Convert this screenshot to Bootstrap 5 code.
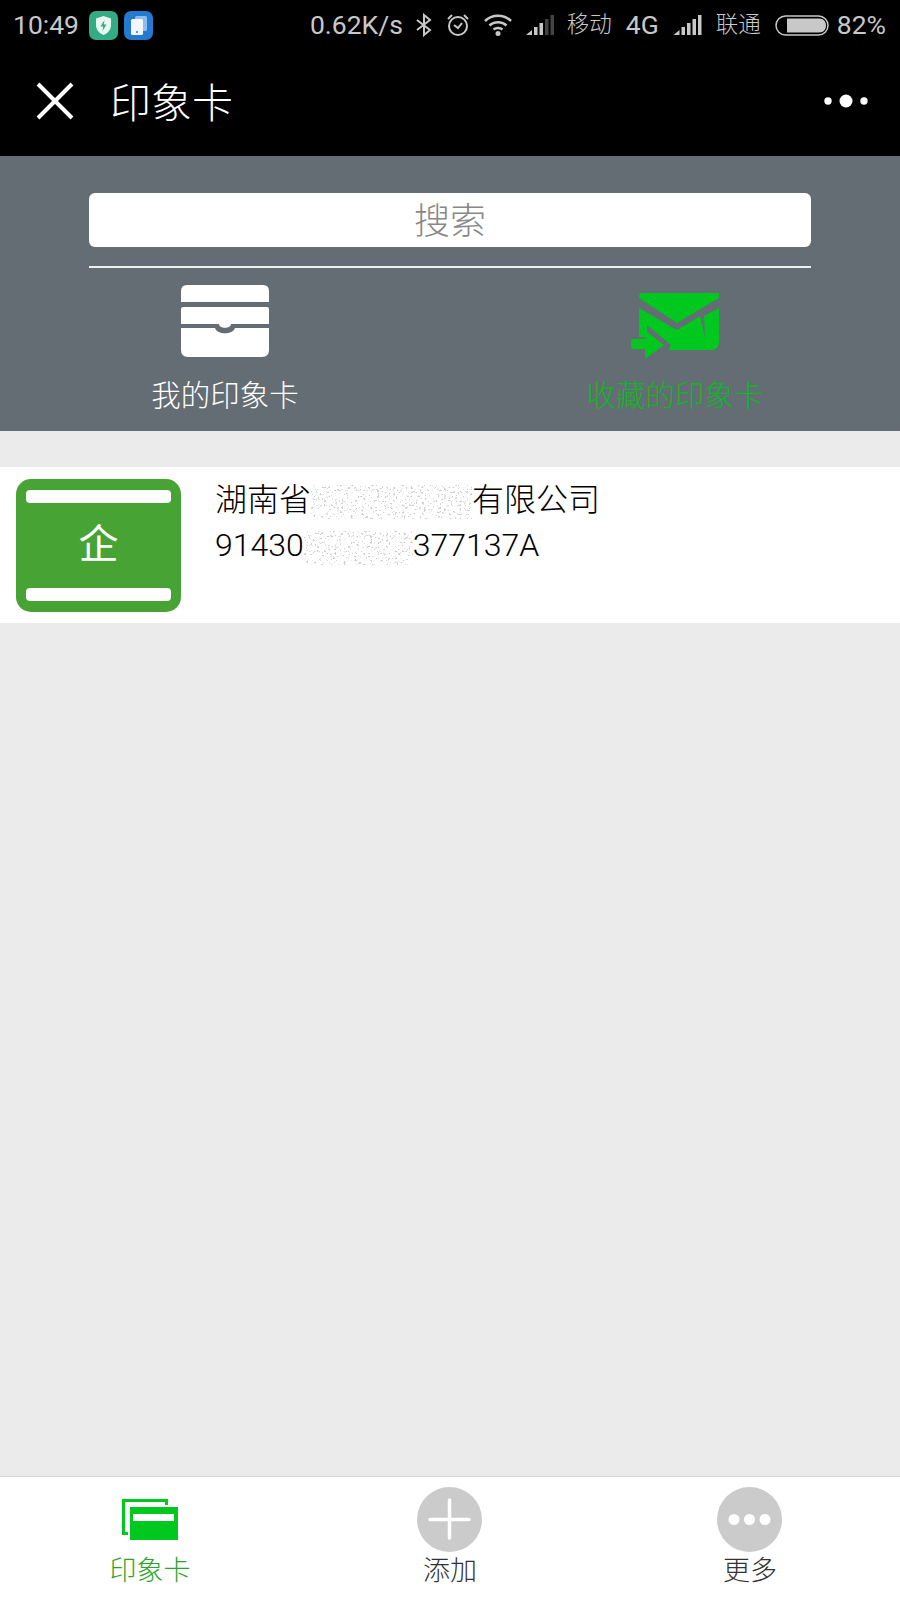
<!DOCTYPE html>
<html lang="zh-CN">
<head>
    <meta charset="UTF-8">
    <title>印象卡</title>
    <link href="https://cdn.jsdelivr.net/npm/bootstrap@5.3.3/dist/css/bootstrap.min.css" rel="stylesheet">
    <style>
        body {
            font-family: "Liberation Sans", "Noto Sans CJK SC", sans-serif;
            background-color: #ebebeb;
        }

        .screen {
            height: 1600px;
        }

        /* status bar */
        .status-bar {
            height: 50px;
            padding: 0 14px 0 13px;
            color: #c8c8c8;
            font-family: Roboto, "Noto Sans CJK SC", sans-serif;
            font-size: 26.5px;
            font-weight: 400;
            line-height: 1;
            white-space: nowrap;
        }

        .app-badge {
            width: 29px;
            height: 29px;
            border-radius: 7px;
            margin-right: 6px;
        }

        .badge-green {
            background-color: #33ab84;
            margin-left: 10px;
        }

        .badge-blue {
            background-color: #2479d0;
        }

        .status-right {
            gap: 14px;
        }

        .status-tight {
            margin-left: -1px;
        }

        .status-cjk {
            font-family: "Noto Sans CJK SC", sans-serif;
            font-size: 22.5px;
            font-weight: 300;
            margin-top: -5px;
        }

        .status-pct {
            margin-left: -6px;
        }

        .title-bar {
            height: 106px;
            padding: 0 32px 5px 36px;
        }

        .title-text {
            font-family: "Noto Sans CJK SC", sans-serif;
            font-size: 41px;
            font-weight: 300;
            line-height: 1;
            margin-left: 36px;
        }

        /* header panel */
        .top-panel {
            height: 275px;
            background-color: #646c74;
            padding-top: 37px;
        }

        .search-area {
            width: 722px;
            margin: 0 auto;
        }

        .search-box {
            height: 54px;
            border-radius: 6px;
            color: #888;
            font-family: "Noto Sans CJK SC", sans-serif;
            font-size: 36px;
            font-weight: 300;
            line-height: 50px;
        }

        .search-line {
            height: 2px;
            margin-top: 19px;
            background-color: #eef0f0;
        }

        .panel-icon {
            height: 76px;
            margin-top: 17px;
        }

        .panel-label {
            margin-top: 12px;
            font-family: "Noto Sans CJK SC", sans-serif;
            font-size: 29.5px;
            font-weight: 300;
            line-height: 40px;
        }

        .label-green {
            color: #12b52a;
        }

        /* list */
        .card-row {
            height: 156px;
            margin-top: 36px;
            padding: 12px 0 0 16px;
        }

        .qi-icon {
            width: 165px;
            height: 133px;
            border-radius: 15px;
            background-color: #47a333;
            padding: 11px 10px;
        }

        .qi-bar {
            height: 13px;
            border-radius: 4px;
        }

        .qi-char {
            font-family: "Noto Sans CJK SC", sans-serif;
            font-size: 40px;
            font-weight: 400;
            line-height: 1;
            margin-bottom: 10px;
        }

        .card-text {
            margin-left: 34px;
            margin-top: -3px;
            font-family: Roboto, "Noto Sans CJK SC", sans-serif;
            font-size: 32px;
            font-weight: 300;
            line-height: 46px;
            white-space: nowrap;
        }

        .card-name {
            font-family: "Noto Sans CJK SC", sans-serif;
            font-weight: 300;
            margin-top: -2px;
            margin-bottom: 2px;
        }

        .masked {
            display: inline-block;
            vertical-align: middle;
        }

        /* tab bar */
        .tab-bar {
            height: 124px;
            border-top: 1px solid #d4d4d4;
        }

        .tab-icon {
            height: 65px;
            margin-top: 10px;
        }

        .tab-label {
            margin-top: -2px;
            font-family: "Noto Sans CJK SC", sans-serif;
            font-size: 27px;
            font-weight: 300;
            line-height: 38px;
            color: #333;
        }

        .tab-active {
            color: #2aa52a;
        }
    </style>
</head>
<body>

<div class="screen d-flex flex-column">

    <!-- status bar -->
    <div class="bg-black">
        <div class="status-bar d-flex align-items-center">
            <span>10:49</span>
            <span class="app-badge badge-green d-flex align-items-center justify-content-center">
                <svg width="21" height="21" viewBox="0 0 21 21"><path d="M10.500 1 L18 3.500 V10 C18 15 14.500 18.500 10.500 20 C6.500 18.500 3 15 3 10 V3.500 Z" fill="#e8f7f1"/><path d="M11.500 5 L7.500 11.500 H10.200 L9.500 16 L13.500 9.500 H10.800 Z" fill="#33ab84"/></svg>
            </span>
            <span class="app-badge badge-blue d-flex align-items-center justify-content-center">
                <svg width="21" height="21" viewBox="0 0 21 21"><rect x="7" y="1" width="12" height="15" rx="1.500" fill="#8fbdec"/><rect x="3" y="4" width="12" height="16" rx="1.500" fill="#f2f7fd"/><circle cx="9" cy="17" r="1" fill="#2479d0"/></svg>
            </span>

            <div class="status-right ms-auto d-flex align-items-center">
                <span>0.62K/s</span>
                <svg class="status-tight" width="16" height="24" viewBox="0 0 16 24" fill="none" stroke="#c8c8c8" stroke-width="2"><path d="M1 7 L14 17 L8 22 V2 L14 7 L1 17"/></svg>
                <svg width="24" height="24" viewBox="0 0 24 24" fill="none" stroke="#c8c8c8" stroke-width="2"><circle cx="12" cy="13" r="9"/><path d="M8 12 L12 15 L16 10 M2 6 L6 2 M18 2 L22 6"/></svg>
                <svg class="status-tight" width="30" height="24" viewBox="0 0 30 24" fill="none" stroke="#c8c8c8" stroke-width="2.500"><path d="M2 8 C9 1 21 1 28 8 M6.500 12.500 C11 8 19 8 23.500 12.500 M10.500 16.500 C13 14.500 17 14.500 19.500 16.500"/><circle cx="15" cy="20.500" r="2.500" fill="#c8c8c8" stroke="none"/></svg>
                <svg class="status-tight" width="28" height="21" viewBox="0 0 28 21"><path d="M0 20 L6 15 V20 Z" fill="#c8c8c8"/><rect x="8" y="12" width="3.500" height="8" fill="#c8c8c8"/><rect x="13.500" y="8" width="3.500" height="12" fill="#c8c8c8"/><rect x="19" y="4" width="3.500" height="16" fill="#444"/><rect x="24.500" y="0" width="3.500" height="20" fill="#444"/></svg>
                <span class="status-cjk status-tight">移动</span>
                <span>4G</span>
                <svg width="29" height="21" viewBox="0 0 28 21" fill="#c8c8c8"><path d="M0 20 L6 15 V20 Z"/><rect x="8" y="12" width="3.500" height="8"/><rect x="13.500" y="8" width="3.500" height="12"/><rect x="19" y="4" width="3.500" height="16"/><rect x="24.500" y="0" width="3.500" height="20"/></svg>
                <span class="status-cjk">联通</span>
                <svg width="54" height="21" viewBox="0 0 54 21"><rect x="1" y="1" width="52" height="19" rx="9.500" fill="none" stroke="#c8c8c8" stroke-width="1.500"/><path d="M12 3.500 H44 C49 3.500 51 7 51 10.500 C51 14 49 17.500 44 17.500 H12 Z" fill="#c8c8c8"/></svg>
                <span class="status-pct">82%</span>
            </div>
        </div>

        <!-- title bar -->
        <div class="title-bar d-flex align-items-center text-white">
            <svg width="38" height="38" viewBox="0 0 38 38" stroke="#fff" stroke-width="4"><path d="M2 2 L36 36 M36 2 L2 36"/></svg>
            <span class="title-text">印象卡</span>
            <svg class="ms-auto" width="44" height="16" viewBox="0 0 44 16" fill="#fff"><circle cx="4" cy="8" r="3.700"/><circle cx="22" cy="8" r="6.500"/><circle cx="40" cy="8" r="3.700"/></svg>
        </div>
    </div>

    <!-- search + categories -->
    <div class="top-panel">
        <div class="search-area">
            <div class="search-box bg-white text-center">搜索</div>
            <div class="search-line"></div>
        </div>
        <div class="row g-0 text-center">
            <div class="col-6">
                <div class="panel-icon d-flex justify-content-center">
                    <svg width="88" height="72" viewBox="0 0 88 72" fill="#fff">
                        <path d="M6 0 H82 Q88 0 88 6 V17 H0 V6 Q0 0 6 0 Z"/>
                        <path d="M2 22 H86 Q88 22 88 24 V39 H50 C50 44 38 44 38 39 H0 V24 Q0 22 2 22 Z"/>
                        <path d="M0 43 H34 C36 50 52 50 54 43 H88 V65 Q88 72 81 72 H7 Q0 72 0 65 Z"/>
                    </svg>
                </div>
                <div class="panel-label text-white">我的印象卡</div>
            </div>
            <div class="col-6">
                <div class="panel-icon d-flex justify-content-center">
                    <svg width="88" height="76" viewBox="0 -7 88 76" fill="#00c81f">
                        <path d="M10 1 H86 Q90 1 88 6 L46 31 L8 6 Q8 1 10 1 Z"/>
                        <path d="M8 16 L46 38 L69 24 L74 45 L73 24 L88 16 V50 Q88 58 80 58 H37 L40 53 L16 33 V45 H8 Z"/>
                        <path d="M2 47 H14 V38 L33 53 L14 67 V57 H2 Q0 57 0 55 V49 Q0 47 2 47 Z"/>
                    </svg>
                </div>
                <div class="panel-label label-green">收藏的印象卡</div>
            </div>
        </div>
    </div>

    <!-- saved card -->
    <div class="card-row bg-white d-flex">
        <div class="qi-icon d-flex flex-column justify-content-between flex-shrink-0">
            <div class="qi-bar bg-white"></div>
            <div class="qi-char text-white text-center">企</div>
            <div class="qi-bar bg-white"></div>
        </div>
        <div class="card-text text-black">
            <!-- the name and number are smudged out in the screenshot -->
            <svg width="0" height="0" class="position-absolute">
                <filter id="smudge" x="0" y="0" width="100%" height="100%">
                    <feTurbulence type="fractalNoise" baseFrequency="0.45" numOctaves="2" seed="7"/>
                    <feColorMatrix type="matrix" values="0 0 0 0 0.62  0 0 0 0 0.62  0 0 0 0 0.62  0 0 0 9 -5.400"/>
                </filter>
            </svg>
            <div class="card-name">湖南省<svg class="masked" width="161" height="34" viewBox="0 0 161 34"><rect width="161" height="34" filter="url(#smudge)"/></svg>有限公司</div>
            <div>91430<svg class="masked" width="109" height="34" viewBox="0 0 109 34"><rect width="109" height="34" filter="url(#smudge)"/></svg>377137A</div>
        </div>
    </div>

    <div class="flex-grow-1"></div>

    <!-- tab bar -->
    <div class="tab-bar bg-white row g-0 text-center">
        <div class="col-4">
            <div class="tab-icon d-flex justify-content-center align-items-center">
                <svg width="56" height="41" viewBox="0 0 56 41" fill="#00c81f">
                    <path d="M0 0 H46 V6 H43 V3 H3 V33 H6 V36 H0 Z"/>
                    <path d="M8 8 H56 V41 H8 Z M11 15 V22 H52 V15 Z" fill-rule="evenodd"/>
                </svg>
            </div>
            <div class="tab-label tab-active">印象卡</div>
        </div>
        <div class="col-4">
            <div class="tab-icon d-flex justify-content-center">
                <svg width="65" height="65" viewBox="0 0 65 65"><circle cx="32.500" cy="32.500" r="32.500" fill="#cbcbcb"/><path d="M32.500 13 V51 M13 32.500 H52" stroke="#fff" stroke-width="3.500" stroke-linecap="round"/></svg>
            </div>
            <div class="tab-label">添加</div>
        </div>
        <div class="col-4">
            <div class="tab-icon d-flex justify-content-center">
                <svg width="65" height="65" viewBox="0 0 65 65" fill="#fff"><circle cx="32.500" cy="32.500" r="32.500" fill="#cbcbcb"/><circle cx="17" cy="32.500" r="5.500"/><circle cx="32.500" cy="32.500" r="5.500"/><circle cx="48" cy="32.500" r="5.500"/></svg>
            </div>
            <div class="tab-label">更多</div>
        </div>
    </div>
</div>

<script src="https://cdn.jsdelivr.net/npm/bootstrap@5.3.3/dist/js/bootstrap.bundle.min.js"></script>
</body>
</html>
